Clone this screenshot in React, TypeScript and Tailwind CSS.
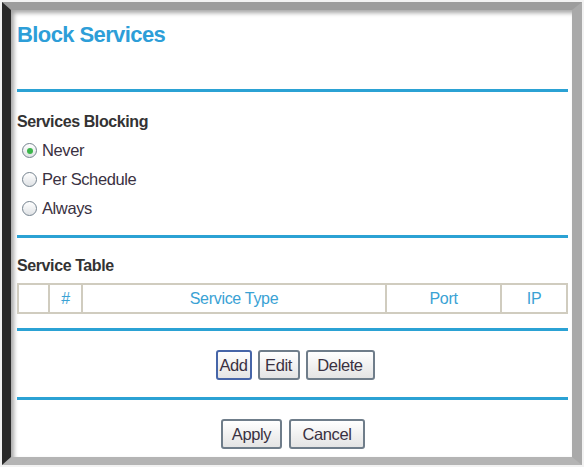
import React from 'react'

const font = { fontFamily: '"Liberation Sans", Arial, sans-serif' }

function Rule() {
  return <div className="h-[3px] bg-[#2ba2d4]" />
}

function Radio({ label, checked }: { label: string; checked?: boolean }) {
  return (
    <label className="flex h-[29px] items-center pl-[5px] text-[16.5px] tracking-[-0.4px] text-[#3a3142]">
      <span className="mr-[5px] flex h-[15px] w-[15px] items-center justify-center rounded-full border-[1.5px] border-[#75838f] bg-gradient-to-b from-white to-[#dfe2e5]">
        {checked && <span className="h-[6px] w-[6px] rounded-full bg-[#3cb54b]" />}
      </span>
      {label}
    </label>
  )
}

function Btn({ label, w, focus }: { label: string; w: string; focus?: boolean }) {
  return (
    <button
      className={
        'flex h-[30px] items-center justify-center rounded-[3px] border-2 bg-gradient-to-b from-white to-[#e4e4e4] text-[16.5px] tracking-[-0.4px] text-[#3a3142] ' +
        w +
        (focus ? ' border-[#4665a8]' : ' border-[#6f7d8a]')
      }
    >
      {label}
    </button>
  )
}

export default function App() {
  return (
    <div className="h-[467px] w-[584px] bg-[#f2f2f2] p-[2px]" style={font}>
      <div className="h-[463px] border-b-[8px] border-l-[9px] border-r-[10px] border-t-[8px] border-b-[#b4b4b4] border-l-[#2a2a2a] border-r-[#a9a9a9] border-t-[#9c9c9c] bg-white pl-[6px] pr-[4px] shadow-[inset_3px_3px_4px_rgba(0,0,0,0.35)]">
        <div className="h-[79px] pt-[13px]">
          <h1 className="text-[22px] font-bold leading-[24px] tracking-[-0.6px] text-[#2d9ed8]">Block Services</h1>
        </div>
        <Rule />

        <div className="mt-[20px] h-[20px] text-[16px] font-bold leading-[20px] tracking-[-0.4px] text-[#333]">Services Blocking</div>
        <div className="mt-[4px] flex flex-col">
          <Radio label="Never" checked />
          <Radio label="Per Schedule" />
          <Radio label="Always" />
        </div>
        <div className="mt-[12px]">
          <Rule />
        </div>

        <div className="mt-[18px] h-[20px] text-[16px] font-bold leading-[20px] tracking-[-0.4px] text-[#333]">Service Table</div>
        <div className="mt-[7px] flex h-[31px] border-2 border-[#d0ccbf] text-[16px] tracking-[-0.3px] text-[#3aa2d4]">
          <div className="w-[31px] border-r-2 border-[#d0ccbf]" />
          <div className="flex w-[33px] items-center justify-center border-r-2 border-[#d0ccbf]">#</div>
          <div className="flex w-[304px] items-center justify-center border-r-2 border-[#d0ccbf]">Service Type</div>
          <div className="flex w-[115px] items-center justify-center border-r-2 border-[#d0ccbf]">Port</div>
          <div className="flex flex-1 items-center justify-center">IP</div>
        </div>
        <div className="mt-[14px]">
          <Rule />
        </div>

        <div className="mt-[19px] flex justify-center gap-[6px] pl-[5px]">
          <Btn label="Add" w="w-[36px]" focus />
          <Btn label="Edit" w="w-[42px]" />
          <Btn label="Delete" w="w-[69px]" />
        </div>
        <div className="mt-[17px]">
          <Rule />
        </div>

        <div className="mt-[19px] flex justify-center gap-[7px] pl-[1px]">
          <Btn label="Apply" w="w-[61px]" />
          <Btn label="Cancel" w="w-[76px]" />
        </div>
      </div>
    </div>
  )
}
